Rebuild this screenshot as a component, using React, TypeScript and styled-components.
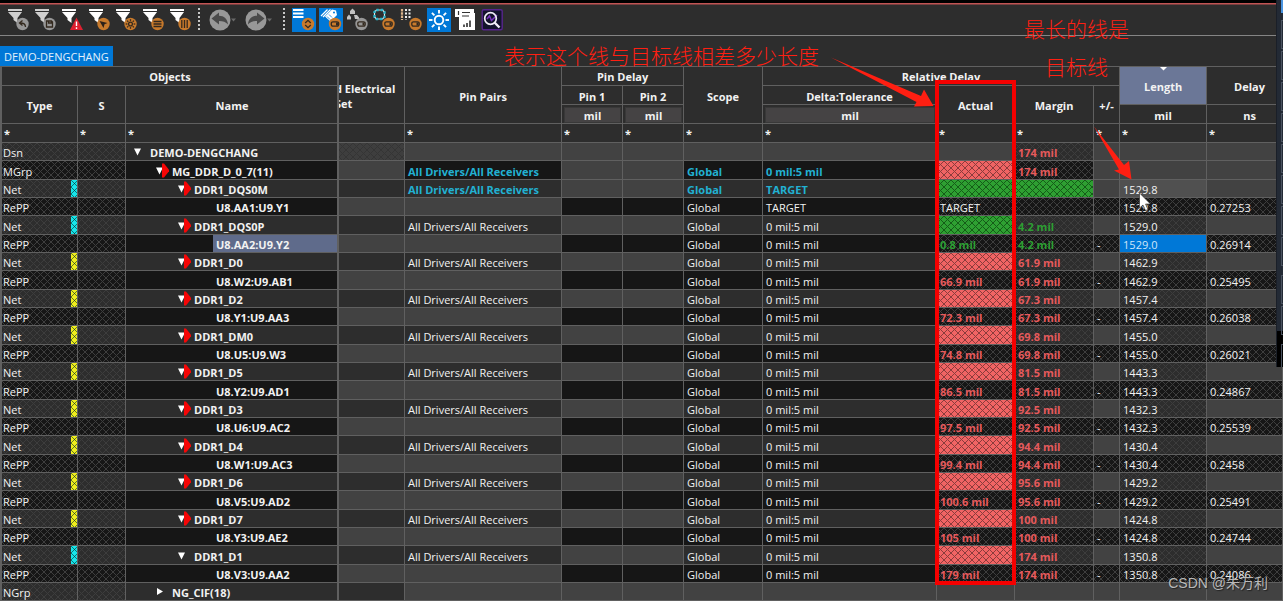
import React from "react";
import styled, { createGlobalStyle, css } from "styled-components";

const line = "#606060";
const panel = "#2d2d2d";
const dark = "#161616";
const disabled = "#424242";
const orange = "#c87a2c";
const grey = "#979797";

const GlobalStyle = createGlobalStyle`
  * { box-sizing: border-box; }
  body {
    margin: 0;
    background: ${panel};
    overflow: hidden;
  }
  body, button, input {
    font-family: "Open Sans", "Noto Sans", "Noto Sans CJK SC", sans-serif;
    font-size: 11px;
    line-height: 15px;
    color: #f2f2f2;
  }
`;

const Page = styled.div`
  position: relative;
  min-height: 100vh;
  overflow: hidden;
  background: ${panel};
`;

const TopEdge = styled.div`
  height: 5px;
  border-top: 3px solid #000;
  border-bottom: 1px solid #7a4040;
  background: #c25454;
`;

const Toolbar = styled.div`
  display: flex;
  align-items: flex-start;
  height: 31px;
  padding: 3px 0 0 5px;
  border-bottom: 1px solid #858585;
`;

const ToolButton = styled.button<{ $wide?: boolean }>`
  display: block;
  flex: none;
  width: ${(p) => (p.$wide ? 36 : 27)}px;
  height: 24px;
  padding: 0;
  border: 0;
  background: none;
  svg { display: block; }
`;

const Separator = styled.div<{ $space: number }>`
  flex: none;
  width: 2px;
  height: 24px;
  margin: 0 ${(p) => p.$space}px 0 4px;
  background: repeating-linear-gradient(to bottom, #c8c8c8 0 2px, transparent 2px 4px);
`;

const TabStrip = styled.div`
  display: flex;
  align-items: flex-end;
  height: 30px;
`;

const Tab = styled.button`
  height: 20px;
  padding: 0 4px;
  border: 0;
  background: #0078d7;
  color: #e4f1fb;
  white-space: nowrap;
`;

const Grid = styled.table`
  width: 100%;
  min-width: 1283px;
  table-layout: fixed;
  border-collapse: separate;
  border-spacing: 0;
  border-top: 1px solid ${line};
  border-left: 2px solid ${line};
`;

const HeadRow = styled.tr`
  height: 19px;
`;

const Head = styled.th<{ $selected?: boolean; $frozen?: boolean; $last?: boolean }>`
  position: relative;
  padding: 2px 0 0;
  padding-left: ${(p) => (p.$last ? 10 : 0)}px;
  border-right: 1px solid ${line};
  border-bottom: 1px solid ${line};
  background: ${(p) => (p.$selected ? "#6b7797" : panel)};
  font-weight: 700;
  line-height: 15px;
  text-align: center;
  white-space: nowrap;
  overflow: hidden;
  ${(p) => p.$frozen && css`box-shadow: inset -1px 0 ${line};`}
  &[colspan] { padding-top: 0; }
`;

const FilterHead = styled(Head)`
  padding: 0;
`;

const ScrolledLabel = styled.div`
  margin-left: -4px;
  text-align: left;
`;

const Unit = styled.div`
  height: 16px;
  margin: 0 1px 0 2px;
  border: 1px solid #383838;
  background: #454344;
`;

const SortMark = styled.svg`
  position: absolute;
  top: 0;
  left: 40px;
`;

const FilterInput = styled.input`
  display: block;
  width: 100%;
  height: 18px;
  padding: 0 2px;
  border: 0;
  outline: 0;
  background: transparent;
  font-weight: 700;
`;

const Row = styled.tr<{ $dark: boolean }>`
  height: 18px;
  background: ${(p) => (p.$dark ? dark : panel)};
  --hatch: ${(p) => (p.$dark ? "#3e3e3e" : "#3d3d3d")};
  &:nth-child(3n + 2) { height: 19px; }
`;

const hatch = (color: string) => css`
  background-image:
    linear-gradient(45deg, transparent 46%, ${color} 46% 54%, transparent 54%),
    linear-gradient(-45deg, transparent 46%, ${color} 46% 54%, transparent 54%);
  background-size: 7px 7px;
`;

type Fill = "plain" | "hatch" | "off" | "offHatch" | "red" | "green" | "hover" | "picked";
type Tone = "normal" | "cyan" | "red" | "green";

const fills = {
  plain: css``,
  hatch: hatch("var(--hatch)"),
  off: css`background-color: ${disabled};`,
  offHatch: css`background-color: #3e3e3e; ${hatch("#353535")}`,
  red: css`background-color: #f06464; ${hatch("#8a3c3c")}`,
  green: css`background-color: #2ea032; ${hatch("#155c18")}`,
  hover: css`background-color: #505050;`,
  picked: css`background-color: #0078d7; color: #cfe6fa;`,
};

const tones = {
  normal: css``,
  cyan: css`color: #22b1d2; font-weight: 700;`,
  red: css`color: #e65a5c; font-weight: 700;`,
  green: css`color: #2d9f33; font-weight: 700;`,
};

const Cell = styled.td<{ $fill?: Fill; $tone?: Tone; $kind?: "type" | "name" }>`
  position: relative;
  padding: ${(p) => (p.$kind === "name" ? "0" : p.$kind === "type" ? "2px 0 0 1px" : "2px 0 0 3px")};
  border-right: 1px solid ${line};
  border-bottom: 1px solid ${line};
  white-space: nowrap;
  overflow: hidden;
  ${(p) => p.$kind === "name" && css`box-shadow: inset -1px 0 ${line};`}
  ${(p) => fills[p.$fill ?? "plain"]}
  ${(p) => tones[p.$tone ?? "normal"]}
`;

const Swatch = styled.i<{ $color: string }>`
  position: absolute;
  top: 0;
  right: 0;
  bottom: 0;
  width: 6px;
  background-color: ${(p) => p.$color};
  ${hatch("rgba(0, 40, 40, 0.6)")}
`;

const Name = styled.div<{ $level: number }>`
  display: flex;
  align-items: center;
  height: 17px;
  margin-right: 1px;
  padding-left: ${(p) => p.$level * 22}px;
  font-weight: 700;
  svg { flex: none; display: block; }
`;

const NameLabel = styled.span<{ $selected?: boolean }>`
  flex: 1;
  height: 17px;
  padding: 2px 0 0 3px;
  line-height: 15px;
  background: ${(p) => (p.$selected ? "#5f6b8b" : "none")};
`;

const Note = styled.p`
  position: absolute;
  margin: 0;
  color: #ff1f12;
  font: 300 21px/38px "Noto Sans CJK SC", sans-serif;
  text-align: center;
  white-space: nowrap;
`;

const LengthNote = styled(Note)`
  top: 36px;
  left: 504px;
`;

const TargetNote = styled(Note)`
  top: 9px;
  left: 1024px;
`;

const Marker = styled.div`
  position: absolute;
  top: 80px;
  left: 935px;
  width: 81px;
  height: 505px;
  border: 4px solid #f50000;
`;

const Arrows = styled.svg`
  position: absolute;
  top: 0;
  left: 0;
  pointer-events: none;
`;

const Watermark = styled.span`
  position: absolute;
  top: 573px;
  right: 15px;
  color: #b9b9b9;
  font: 400 14px/20px "Liberation Sans", "Noto Sans CJK SC", sans-serif;
  text-shadow: 1px 1px 1px #222;
`;

const SideWindow = styled.div`
  position: absolute;
  top: 0;
  right: 0;
  width: 7px;
  height: 367px;
  background: linear-gradient(#232a35 0 331px, #000 331px);
  border-left: 1px solid #1a1f28;
  overflow: hidden;
`;

const SideActive = styled.div`
  height: 13px;
  margin-left: 4px;
  background: #4a94e0;
`;

const SideBox = styled.div<{ $gap?: boolean }>`
  height: 29px;
  margin: ${(p) => (p.$gap ? 9 : 2)}px 0 0 4px;
  border: 1px solid #4a5360;
  border-right: 0;
  &:nth-child(2) { margin-top: 7px; }
`;

function Funnel({ muted, children }: { muted?: boolean; children: React.ReactNode }) {
  return (
    <svg width="27" height="24" viewBox="0 0 27 24">
      <path d="M3 1h14v2H3zM3 4h14l-4.500 6v5l-4-3v-2z" fill={muted ? "#cfcfcf" : "#fff"} />
      {children}
    </svg>
  );
}

function Badge({ color, x = 17.5, children }: { color: string; x?: number; children?: React.ReactNode }) {
  return (
    <g transform={`translate(${x} 16)`}>
      <circle r="6.2" fill={color} />
      <g fill="none" stroke="#33291e" strokeWidth="1.3">{children}</g>
    </g>
  );
}

const Toggle = () => (
  <>
    <rect x="-3.7" y="-2.2" width="7.4" height="4.4" rx="1.6" />
    <path d="M1 -1.5h2v3h-2z" fill="#33291e" stroke="none" />
  </>
);

const rays = [0, 45, 90, 135, 180, 225, 270, 315];

const filterIcons: [string, React.ReactNode][] = [
  ["Undo filter", <Funnel muted><Badge color={grey}><path d="M3 3C3 0 1-1-2-1M0-3.5-3-1 0 1.5" /></Badge></Funnel>],
  ["Save filter", <Funnel muted><Badge color={grey}><path d="M-3-3H2L3-2V3H-3zM-1-3v2h3v-2" /></Badge></Funnel>],
  ["Filter violations", (
    <Funnel>
      <path d="M17.5 9.5 24 22H11z" fill="#dd2030" />
      <path d="M17.5 13.5v4.5M17.5 19.3v1.6" stroke="#fff" strokeWidth="1.4" />
    </Funnel>
  )],
  ["Filter selection", <Funnel><Badge color={orange}><path d="M-4-3 4-1 1 .3 0 4z" fill="#2b2019" stroke="none" /></Badge></Funnel>],
  ["Filter settings", (
    <Funnel>
      <Badge color={orange}>
        <circle r="1.9" />
        {rays.map((a) => <path key={a} d="M0-3.1v-1.7" transform={`rotate(${a})`} />)}
      </Badge>
    </Funnel>
  )],
  ["Filter rows", <Funnel><Badge color={orange}><path d="M-4-2.5h8M-4 0h8M-4 2.5h8" /></Badge></Funnel>],
  ["Filter columns", <Funnel><Badge color={orange}><path d="M-2.7-4v8M0-4v8M2.7-4v8" /></Badge></Funnel>],
];

const viewIcons: [string, React.ReactNode][] = [
  ["Expand rows", (
    <>
      <rect x="2" width="24" height="24" fill="#0078d7" />
      <path d="M3 2h10.500M3 5.500h10.500M3 9h10.500" stroke="#fff" strokeWidth="1.800" />
      <Badge color={orange} x={18}><path d="M-2.8-1 0-3.700 2.800-1M-2.800 1 0 3.700 2.800 1" /></Badge>
    </>
  )],
  ["Toggle labels", (
    <>
      <rect x="2" width="24" height="24" fill="#0078d7" />
      <path d="M10.500 1.500 4 8M13.500 1.500 6 9" stroke="#fff" strokeWidth="1.300" />
      <path d="M8 8.500 15 1.500l4 1 1 4.500-6.500 6.500z" fill="#fff" />
      <path d="M10 8.500l3 3M12 6.500l3 3" stroke="#0078d7" strokeWidth=".8" />
      <circle cx="17" cy="4.500" r="1" fill="#0078d7" />
      <Badge color={orange} x={18}><Toggle /></Badge>
    </>
  )],
  ["Toggle hierarchy", (
    <>
      <path d="M6 3l2.500-2.500L11 3v3H6zM3 9l2-2.500L7 9v2.500H3zM10 7h3l2 2.500V11h-4z" fill="#c2c2c2" />
      <Badge color={grey} x={17.500}><Toggle /></Badge>
    </>
  )],
  ["Toggle outline", (
    <>
      <path d="M5.500 2h6l2 2v5l-2 2h-6l-2-2V4z" fill="none" stroke="#d8e8ea" strokeWidth="1.200" />
      <path d="M5.500 2h6l2 2v5l-2 2h-6l-2-2V4z" fill="none" stroke="#28b6cc" strokeWidth="2.400" strokeDasharray="2.200 2" />
      <Badge color={orange} x={17.500}><Toggle /></Badge>
    </>
  )],
  ["Toggle list", (
    <>
      <path d="M4 1v11" stroke="#dcb48c" strokeWidth="2.200" strokeDasharray="2.500 .8" />
      <path d="M8 1v11M11.500 1v9" stroke="#eee" strokeWidth="2" strokeDasharray="2 1.500" />
      <Badge color={orange} x={17.500}><Toggle /></Badge>
    </>
  )],
  ["Highlight", (
    <>
      <rect x="2" width="24" height="24" fill="#0078d7" />
      <g transform="translate(14 12)" stroke="#fff" strokeWidth="1.900" fill="none">
        <circle r="4.300" />
        {rays.map((a) => <path key={a} d="M0-6.500V-10" transform={`rotate(${a})`} />)}
      </g>
    </>
  )],
  ["Report", (
    <>
      <path d="M3 1h19v4h1v17H7V9H3z" fill="#fff" />
      <path d="M6.500 3v4M10 4.500h8M10 8h7" stroke="#333" strokeWidth="1.200" />
      <path d="M12 19v-2.500M15 19v-4M18 19v-6.500" stroke="#222" strokeWidth="1.500" />
    </>
  )],
  ["Search waveform", (
    <>
      <rect x="3.200" y="1.700" width="20" height="20" rx="1.500" fill="#14142c" stroke="#56258c" strokeWidth="1.400" />
      <path d="m8 11 2.500-3 2 4.500L18 7" fill="none" stroke="#7a35c0" strokeWidth="1.500" />
      <circle cx="11.500" cy="10.500" r="5.800" fill="none" stroke="#f1edf7" strokeWidth="1.700" />
      <path d="m15.500 14.500 5 5" stroke="#f1edf7" strokeWidth="2.400" />
    </>
  )],
];

function History({ flip }: { flip?: boolean }) {
  return (
    <svg width="36" height="24" viewBox="0 0 36 24">
      <circle cx="13" cy="12" r="10.500" fill="#989898" />
      <path
        d="M4.500 10.500 12 4.500v3.300c5 0 8.500 3 9 8.700-2-2.500-5-3.500-9-3.500v3.500z"
        fill="#4a4a4a"
        transform={flip ? "translate(26 0) scale(-1 1)" : undefined}
      />
      <path d="M24 10.500h5l-2.500 3z" fill="#6a6a6a" />
    </svg>
  );
}

function Twisty({ state, flag }: { state?: "open" | "closed"; flag?: boolean }) {
  return (
    <svg width="21" height="17" viewBox="0 0 21 17">
      {state === "open" && <path d="M8 5.500h7l-3.500 7z" fill="#fff" />}
      {state === "closed" && <path d="M9 5v7l6-3.500z" fill="#fff" />}
      {flag && <path d="M14 1.500h2l5.500 7-5.500 7h-2z" fill="#f60606" />}
    </svg>
  );
}

interface Entry {
  type: "Dsn" | "MGrp" | "Net" | "RePP" | "NGrp";
  name: string;
  color?: string;
  pairs?: string;
  scope?: string;
  delta?: string;
  actual?: string;
  margin?: string;
  length?: string;
  delay?: string;
}

const cyan = "#17e6ea";
const yellow = "#f0ee1c";
const receivers = "All Drivers/All Receivers";

const nets: [string, string, string, string, string, string, string][] = [
  ["DDR1_DQS0P", "U8.AA2:U9.Y2", cyan, "0.8 mil", "4.2 mil", "1529.0", "0.26914"],
  ["DDR1_D0", "U8.W2:U9.AB1", yellow, "66.9 mil", "61.9 mil", "1462.9", "0.25495"],
  ["DDR1_D2", "U8.Y1:U9.AA3", yellow, "72.3 mil", "67.3 mil", "1457.4", "0.26038"],
  ["DDR1_DM0", "U8.U5:U9.W3", yellow, "74.8 mil", "69.8 mil", "1455.0", "0.26021"],
  ["DDR1_D5", "U8.Y2:U9.AD1", yellow, "86.5 mil", "81.5 mil", "1443.3", "0.24867"],
  ["DDR1_D3", "U8.U6:U9.AC2", yellow, "97.5 mil", "92.5 mil", "1432.3", "0.25539"],
  ["DDR1_D4", "U8.W1:U9.AC3", yellow, "99.4 mil", "94.4 mil", "1430.4", "0.2458"],
  ["DDR1_D6", "U8.V5:U9.AD2", yellow, "100.6 mil", "95.6 mil", "1429.2", "0.25491"],
  ["DDR1_D7", "U8.Y3:U9.AE2", yellow, "105 mil", "100 mil", "1424.8", "0.24744"],
  ["DDR1_D1", "U8.V3:U9.AA2", cyan, "179 mil", "174 mil", "1350.8", "0.24086"],
];

const entries: Entry[] = [
  { type: "Dsn", name: "DEMO-DENGCHANG", margin: "174 mil" },
  { type: "MGrp", name: "MG_DDR_D_0_7(11)", pairs: receivers, scope: "Global", delta: "0 mil:5 mil", margin: "174 mil" },
  { type: "Net", name: "DDR1_DQS0M", color: cyan, pairs: receivers, scope: "Global", delta: "TARGET", length: "1529.8" },
  { type: "RePP", name: "U8.AA1:U9.Y1", scope: "Global", delta: "TARGET", actual: "TARGET", length: "1529.8", delay: "0.27253" },
  ...nets.flatMap(([net, pins, color, actual, margin, length, delay]): Entry[] => [
    { type: "Net", name: net, color, pairs: receivers, scope: "Global", delta: "0 mil:5 mil", margin, length },
    { type: "RePP", name: pins, scope: "Global", delta: "0 mil:5 mil", actual, margin, length, delay },
  ]),
  { type: "NGrp", name: "NG_CIF(18)" },
];

const levels = { Dsn: 0, MGrp: 1, Net: 2, RePP: 3, NGrp: 1 };

function EntryRow({ entry }: { entry: Entry }) {
  const { type, name } = entry;
  const net = type === "Net";
  const pair = type === "RePP";
  const strong = type === "MGrp" || name === "DDR1_DQS0M";
  const ok = name.startsWith("DDR1_DQS") || name === "U8.AA2:U9.Y2";
  const tone: Tone = strong ? "cyan" : "normal";
  const valueTone: Tone = entry.actual === "TARGET" ? "normal" : ok ? "green" : "red";
  const edited: Fill = type === "Dsn" || type === "NGrp" ? "off" : "plain";
  const status: Fill = net || type === "MGrp" ? (ok ? "green" : "red") : pair ? "hatch" : "off";
  const lengthFill: Fill =
    name === "DDR1_DQS0M" ? "hover" : name === "U8.AA2:U9.Y2" ? "picked" : net || pair ? "hatch" : "off";

  return (
    <Row $dark={pair || type === "MGrp"}>
      <Cell $kind="type" $fill="hatch">
        {type}
        {entry.color && <Swatch $color={entry.color} />}
      </Cell>
      <Cell $fill="hatch" />
      <Cell $kind="name">
        <Name $level={levels[type]}>
          <Twisty
            state={pair ? undefined : type === "NGrp" ? "closed" : "open"}
            flag={type === "MGrp" || (net && name !== "DDR1_D1")}
          />
          <NameLabel $selected={name === "U8.AA2:U9.Y2"}>{name}</NameLabel>
        </Name>
      </Cell>
      <Cell $fill={type === "Dsn" ? "offHatch" : net || type === "NGrp" ? "plain" : "off"} />
      <Cell $tone={tone} $fill={pair ? "off" : edited}>{entry.pairs}</Cell>
      <Cell $fill={pair ? "plain" : "off"} />
      <Cell $fill={pair ? "plain" : "off"} />
      <Cell $tone={tone} $fill={edited}>{entry.scope}</Cell>
      <Cell $tone={tone} $fill={edited}>{entry.delta}</Cell>
      <Cell $tone={valueTone} $fill={status}>{entry.actual}</Cell>
      <Cell $tone={valueTone} $fill={name === "DDR1_DQS0M" ? "green" : type === "NGrp" ? "off" : "hatch"}>{entry.margin}</Cell>
      <Cell $fill={pair ? "hatch" : "off"}>{pair && entry.margin ? "-" : null}</Cell>
      <Cell $fill={lengthFill}>{entry.length}</Cell>
      <Cell $fill={pair ? "hatch" : "off"}>{entry.delay}</Cell>
    </Row>
  );
}

const widths = [76, 48, 213, 66, 157, 61, 61, 79, 174, 78, 79, 26, 87, undefined];
const filters = ["Type", "S", "Name", "", "Pin Pairs", "Pin 1", "Pin 2", "Scope", "Delta:Tolerance", "Actual", "Margin", "+/-", "Length", "Delay"];

export default function App() {
  return (
    <Page>
      <GlobalStyle />
      <TopEdge />
      <Toolbar role="toolbar" aria-label="Worksheet tools">
        {filterIcons.map(([label, icon]) => (
          <ToolButton key={label} aria-label={label}>{icon}</ToolButton>
        ))}
        <Separator $space={7} />
        <ToolButton $wide aria-label="Undo"><History /></ToolButton>
        <ToolButton $wide aria-label="Redo"><History flip /></ToolButton>
        <Separator $space={5} />
        {viewIcons.map(([label, icon]) => (
          <ToolButton key={label} aria-label={label}>
            <svg width="27" height="24" viewBox="0 0 27 24">{icon}</svg>
          </ToolButton>
        ))}
      </Toolbar>
      <TabStrip><Tab>DEMO-DENGCHANG</Tab></TabStrip>

      <Grid>
        <colgroup>
          {widths.map((w, i) => <col key={i} width={w} />)}
        </colgroup>
        <thead>
          <HeadRow>
            <Head colSpan={3} $frozen>Objects</Head>
            <Head rowSpan={3}><ScrolledLabel>d Electrical<br />Set</ScrolledLabel></Head>
            <Head rowSpan={3}>Pin Pairs</Head>
            <Head colSpan={2}>Pin Delay</Head>
            <Head rowSpan={3}>Scope</Head>
            <Head colSpan={4}>Relative Delay</Head>
            <Head rowSpan={2} $selected>
              <SortMark width="7" height="4"><path d="M0 0h7L3.500 3.500z" fill="#fff" /></SortMark>
              Length
            </Head>
            <Head rowSpan={2} $last>Delay</Head>
          </HeadRow>
          <HeadRow>
            <Head rowSpan={2}>Type</Head>
            <Head rowSpan={2}>S</Head>
            <Head rowSpan={2} $frozen>Name</Head>
            <Head>Pin 1</Head>
            <Head>Pin 2</Head>
            <Head>Delta:Tolerance</Head>
            <Head rowSpan={2}>Actual</Head>
            <Head rowSpan={2}>Margin</Head>
            <Head rowSpan={2}>+/-</Head>
          </HeadRow>
          <HeadRow>
            <Head><Unit>mil</Unit></Head>
            <Head><Unit>mil</Unit></Head>
            <Head><Unit>mil</Unit></Head>
            <Head>mil</Head>
            <Head $last>ns</Head>
          </HeadRow>
          <HeadRow>
            {filters.map((f, i) => (
              <FilterHead key={i} $frozen={f === "Name"}>
                {f && <FilterInput aria-label={`Filter ${f}`} defaultValue="*" />}
              </FilterHead>
            ))}
          </HeadRow>
        </thead>
        <tbody>
          {entries.map((e) => <EntryRow key={e.name} entry={e} />)}
        </tbody>
      </Grid>

      <LengthNote>表示这个线与目标线相差多少长度</LengthNote>
      <TargetNote>最长的线是<br />目标线</TargetNote>
      <Marker />
      <Arrows width="1283" height="601" viewBox="0 0 1283 601">
        <path d="M831 57.500 921 96l3-6.500 9.500 16.500-19.500.5 2.500-4.500z" fill="#ff1f12" />
        <path d="M1094 126.500 1124 165l5-4 2.500 18.500-17.500-9 5-1z" fill="#ff1f12" />
        <path d="M1139.500 193v15l3.500-3 2.500 5.500 2.500-1-2.500-5.500h5z" fill="#fff" stroke="#222" strokeWidth=".6" />
      </Arrows>
      <Watermark>CSDN @朱万利</Watermark>
      <SideWindow>
        <SideActive />
        {Array.from({ length: 11 }, (_, i) => <SideBox key={i} $gap={i === 8 || i === 10} />)}
      </SideWindow>
    </Page>
  );
}
